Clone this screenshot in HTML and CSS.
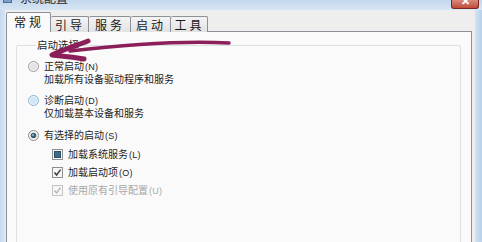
FILE: index.html
```html
<!DOCTYPE html>
<html lang="zh">
<head>
<meta charset="utf-8">
<title>系统配置</title>
<link rel="stylesheet" href="styles.css">
</head>
<body>
<div class="window">
  <div class="titlebar">
    <div class="title">
      <svg class="appicon" width="9" height="9" viewBox="0 0 9 9"><rect x="0.5" y="0.5" width="8" height="8" fill="#7aa0c8" stroke="#4a6f98"/></svg>
      <span>系统配置</span>
    </div>
    <div class="close"><span>✕</span></div>
  </div>
  <div class="client">
    <div class="tabs">
      <div class="tab active">常规</div>
      <div class="tab t2">引导</div>
      <div class="tab t3">服务</div>
      <div class="tab t4">启动</div>
      <div class="tab t5">工具</div>
    </div>
    <div class="panel">
      <fieldset class="group">
        <legend>启动选择</legend>
        <div class="opt first">
          <svg class="radio" width="11" height="11" viewBox="0 0 11 11"><circle cx="5.5" cy="5.5" r="5" fill="#f4f4f4" stroke="#9a9a9a"/><circle cx="5.5" cy="5.5" r="3.6" fill="#e4e4e4"/></svg>
          <span class="lbl">正常启动<span class="key">(N)</span></span>
        </div>
        <div class="desc">加载所有设备驱动程序和服务</div>
        <div class="opt o2">
          <svg class="radio" width="11" height="11" viewBox="0 0 11 11"><circle cx="5.5" cy="5.5" r="5" fill="#e9f4fb" stroke="#8fb3c9"/><circle cx="5.5" cy="5.5" r="3.6" fill="#d2e7f4"/></svg>
          <span class="lbl">诊断启动<span class="key">(D)</span></span>
        </div>
        <div class="desc">仅加载基本设备和服务</div>
        <div class="opt o3">
          <svg class="radio" width="11" height="11" viewBox="0 0 11 11"><circle cx="5.5" cy="5.5" r="5" fill="#f4f4f4" stroke="#8a8a8a"/><circle cx="5.5" cy="5.5" r="2.8" fill="#3c5f77"/><circle cx="5" cy="5" r="1.1" fill="#8fb4cc"/></svg>
          <span class="lbl">有选择的启动<span class="key">(S)</span></span>
        </div>
        <div class="checks">
          <div class="chk">
            <svg width="11" height="11" viewBox="0 0 11 11"><rect x="0.5" y="0.5" width="10" height="10" fill="#f6f6f6" stroke="#8e8f8f"/><rect x="2.5" y="2.5" width="6" height="6" fill="#3d6b86" stroke="#2c5068"/></svg>
            <span class="lbl">加载系统服务<span class="key">(L)</span></span>
          </div>
          <div class="chk">
            <svg width="11" height="11" viewBox="0 0 11 11"><rect x="0.5" y="0.5" width="10" height="10" fill="#f6f6f6" stroke="#8e8f8f"/><path d="M2.5 5.5 L4.6 8 L8.6 2.6" fill="none" stroke="#3a3a3a" stroke-width="1.4"/></svg>
            <span class="lbl">加载启动项<span class="key">(O)</span></span>
          </div>
          <div class="chk disabled">
            <svg width="11" height="11" viewBox="0 0 11 11"><rect x="0.5" y="0.5" width="10" height="10" fill="#f6f6f6" stroke="#c4c4c4"/><path d="M2.5 5.5 L4.6 8 L8.6 2.6" fill="none" stroke="#b4b4b4" stroke-width="1.3"/></svg>
            <span class="lbl">使用原有引导配置<span class="key">(U)</span></span>
          </div>
        </div>
      </fieldset>
    </div>
  </div>
  <svg class="arrow" width="482" height="242" viewBox="0 0 482 242">
    <path d="M229 43 C190 41 130 44 70 51" fill="none" stroke="#8c1f5a" stroke-width="3.5" stroke-linecap="round"/>
    <path d="M88 41 C75 46 62 50 52 55 C62 56 74 57 84 59" fill="none" stroke="#8c1f5a" stroke-width="5" stroke-linecap="round" stroke-linejoin="round"/>
  </svg>
</div>
</body>
</html>
```
FILE: styles.css
```css
html, body {
  margin: 0;
  padding: 0;
}
body {
  width: 482px;
  height: 242px;
  overflow: hidden;
  font-family: "Noto Sans CJK SC", "Noto Sans", sans-serif;
}
.window {
  position: relative;
  width: 482px;
  height: 242px;
  background: linear-gradient(90deg, #c6daee 0, #d6e5f4 5px, #d6e5f4 474px, #b9d1ea 482px);
  display: flex;
  flex-direction: column;
  overflow: hidden;
}
.titlebar {
  height: 10px;
  flex: none;
  display: flex;
  justify-content: space-between;
  overflow: hidden;
  background: linear-gradient(180deg, #c3d7ec, #d7e6f5);
}
.title {
  display: flex;
  align-items: center;
  gap: 8px;
  margin-top: -9px;
  margin-left: 3px;
  height: 14px;
  font-size: 12px;
  line-height: 14px;
  color: #2a2a2a;
}
.close {
  width: 26px;
  height: 8px;
  margin-right: 3px;
  background: linear-gradient(180deg, #d98b7e, #c14a38);
  border: 1px solid #7a2a20;
  border-top: none;
  border-radius: 0 0 3px 3px;
  overflow: hidden;
  display: flex;
  justify-content: center;
}
.close span {
  color: #fff;
  font-size: 11px;
  line-height: 11px;
  margin-top: -5px;
  font-weight: bold;
}
.client {
  flex: 1;
  margin: 0 7px 0 5px;
  padding: 2px 3px 0 1px;
  background: #eeeeee;
  display: flex;
  flex-direction: column;
}
.tabs {
  display: flex;
  align-items: flex-end;
  height: 20px;
  flex: none;
  position: relative;
  z-index: 1;
  margin-bottom: -1px;
}
.tab {
  height: 15px;
  width: 37px;
  border: 1px solid #8d9097;
  border-left: none;
  border-bottom: none;
  border-radius: 2px 2px 0 0;
  background: linear-gradient(180deg, #f4f4f4, #e2e2e2);
  font-size: 12px;
  line-height: 15px;
  color: #1a1a1a;
  text-align: center;
  letter-spacing: 3px;
  text-indent: 1px;
}
.tab.t3 { width: 41px; }
.tab.t4 { width: 39px; }
.tab.t5 { width: 36px; }
.tab.active {
  height: 19px;
  width: 43px;
  border-left: 1px solid #8d9097;
  background: #fafafa;
  line-height: 18px;
}
.panel {
  flex: 1;
  border: 1px solid #8d9097;
  background: #fafafa;
  padding: 6px 10px 0 9px;
}
.group {
  margin: 0;
  height: 220px;
  border: 1px solid #dcdfe3;
  border-radius: 2px;
  padding: 5px 0 0 11px;
  box-sizing: border-box;
  font-size: 10px;
  line-height: 12px;
  color: #1e1e1e;
}
.group legend {
  font-size: 10.5px;
  line-height: 14px;
  padding: 0 1px;
  margin-left: 8px;
}
.opt {
  display: flex;
  align-items: center;
  gap: 5px;
  height: 12px;
}
.opt.first { margin-top: 3px; }
.opt.o2 { margin-top: 9px; }
.opt.o3 { margin-top: 10px; }
.radio {
  flex: none;
}
.lbl {
  line-height: 12px;
  white-space: nowrap;
}
.key {
  font-family: "Liberation Sans", sans-serif;
  font-size: 9px;
  line-height: 10px;
  margin-left: 1px;
  letter-spacing: 0.3px;
}
.desc {
  padding-left: 16px;
  line-height: 12px;
  height: 12px;
  margin-top: 1px;
  white-space: nowrap;
}
.checks {
  display: flex;
  flex-direction: column;
  gap: 4px;
  padding-left: 24px;
  margin-top: 6px;
}
.chk {
  display: flex;
  align-items: center;
  gap: 5px;
  height: 14px;
}
.chk .lbl {
  line-height: 14px;
}
.chk svg {
  flex: none;
}
.chk.disabled {
  color: #a8a8a8;
}
.arrow {
  position: absolute;
  left: 0;
  top: 0;
  pointer-events: none;
}
```
